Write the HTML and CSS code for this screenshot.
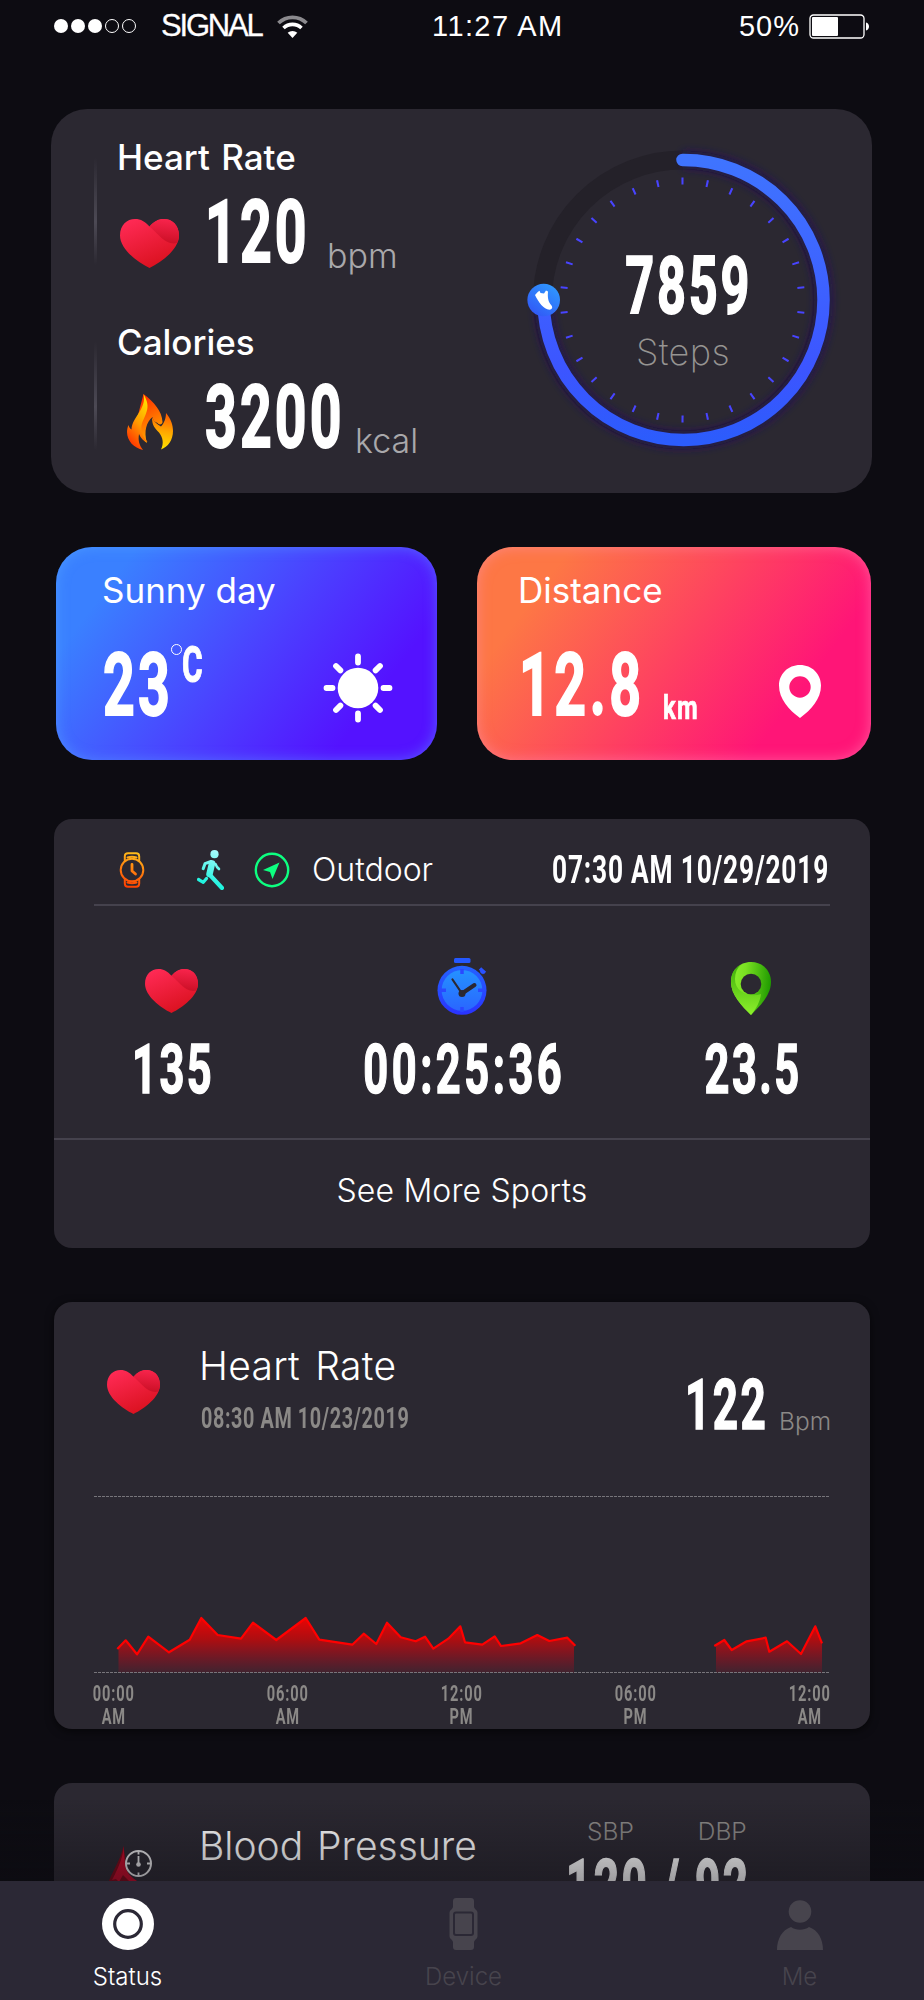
FILE: index.html
```html
<!DOCTYPE html>
<html lang="en">
<head>
    <meta charset="UTF-8">
    <meta name="viewport" content="width=device-width, initial-scale=1.0">
    <title>Status</title>
    <link rel="stylesheet" href="styles.css">
</head>
<body>
    <!-- shared gradients and symbols -->
    <svg class="defs" width="0" height="0">
        <defs>
            <linearGradient id="heartMain" x1="0.2" y1="0" x2="0.7" y2="1">
                <stop offset="0" stop-color="#ff2a55"/>
                <stop offset="1" stop-color="#d8101c"/>
            </linearGradient>
            <linearGradient id="heartFold" x1="0.6" y1="0" x2="0.5" y2="1">
                <stop offset="0" stop-color="#f8244c"/>
                <stop offset="1" stop-color="#cb0f25"/>
            </linearGradient>
            <symbol id="heart" viewBox="0 0 59 49">
                <path fill="url(#heartMain)" d="M29.500 49C17 43 0 30 0 16.500C0 6 7 0 15 0c6 0 10 2.500 14.500 7.500C34 2.500 38 0 44 0c8 0 15 6 15 16.500C59 30 42 43 29.500 49z"/>
                <path fill="url(#heartFold)" d="M29.500 7.500C34 2.500 38 0 44 0c8 0 15 6 15 16.500 0 3-.8 5.500-2 7.500-6 1.500-12-1.500-17-6.500-4-4-7-7-10.500-10z"/>
            </symbol>
        </defs>
    </svg>

    <header class="status-bar">
        <div class="carrier">
            <span class="dots"><i></i><i></i><i></i><i class="off"></i><i class="off"></i></span>
            <span class="signal">SIGNAL</span>
            <svg class="wifi" width="31" height="23" viewBox="0 0 31 23">
                <path d="M15.500 23l-4.800-5.200a7 7 0 0 1 9.600 0z" fill="#fff"/>
                <path d="M6.500 13a13 13 0 0 1 18 0" fill="none" stroke="#fff" stroke-width="3.600"/>
                <path d="M1.500 8a20 20 0 0 1 28 0" fill="none" stroke="#8b8a8e" stroke-width="3.800"/>
            </svg>
        </div>
        <div class="clock">11:27 AM</div>
        <div class="power">
            <span>50%</span>
            <svg width="61" height="25" viewBox="0 0 61 25">
                <rect x="1" y="1" width="54" height="23" rx="3.500" fill="none" stroke="#fff" stroke-width="1.300"/>
                <rect x="3" y="3" width="26" height="19" rx="1" fill="#fff"/>
                <path d="M57 8.500c4 1 4 7 0 8z" fill="#fff"/>
            </svg>
        </div>
    </header>

    <main>
        <section class="card summary">
            <div class="metrics">
                <div class="metric">
                    <div class="bar"></div>
                    <div>
                        <div class="label">Heart Rate</div>
                        <div class="value-row">
                            <svg class="icon-heart" width="59" height="49"><use href="#heart"/></svg>
                            <div class="slot slot-bpm"><span class="din big">120</span></div>
                            <span class="unit">bpm</span>
                        </div>
                    </div>
                </div>
                <div class="metric">
                    <div class="bar"></div>
                    <div>
                        <div class="label">Calories</div>
                        <div class="value-row">
                            <svg class="icon-fire" width="46" height="56" viewBox="0 0 46 56">
                                <defs>
                                    <linearGradient id="fireL" x1="0.7" y1="0" x2="0.3" y2="1">
                                        <stop offset="0" stop-color="#ffe000"/>
                                        <stop offset="0.5" stop-color="#ff9a00"/>
                                        <stop offset="1" stop-color="#ff2a00"/>
                                    </linearGradient>
                                    <linearGradient id="fireM" x1="0.3" y1="0" x2="0.6" y2="1">
                                        <stop offset="0" stop-color="#ff2a00"/>
                                        <stop offset="0.6" stop-color="#ff7a00"/>
                                        <stop offset="1" stop-color="#ffb400"/>
                                    </linearGradient>
                                    <linearGradient id="fireR" x1="0.5" y1="0" x2="0.4" y2="1">
                                        <stop offset="0" stop-color="#ff5a00"/>
                                        <stop offset="0.5" stop-color="#ffa800"/>
                                        <stop offset="1" stop-color="#ffe600"/>
                                    </linearGradient>
                                </defs>
                                <path fill="url(#fireM)" d="M16.500 0C27 8 35 17 35.500 28c0 3-4 3-5 1-3-1-5-3-5-6-6 5-9 14-5.500 26-3-2-5-4-6-8L10 25z"/>
                                <path fill="url(#fireL)" d="M16.500 0c4 7 5 12 3 18-2 7-6 11-5 18 0 4 3 8 6 12-4-1-7-4-8.500-8-1 6 0 11 4 16C7 54 0 47 0 38c0-2 .5-5 1.500-7 .5 2 1.500 4 3 4.500C5 23 20 15 16.500 0z"/>
                                <path fill="url(#fireR)" d="M39 19c5 6 7 12 7 18 0 9-5 16-12 18.500 3-6 2-12-2-17-4-4-7-7-7-15 2 4 5 7 9 9 3-3 5-8 5-13.500z"/>
                            </svg>
                            <div class="slot slot-kcal"><span class="din big">3200</span></div>
                            <span class="unit">kcal</span>
                        </div>
                    </div>
                </div>
            </div>

            <div class="ring">
                <svg width="320" height="320" viewBox="0 0 320 320">
                    <defs>
                        <linearGradient id="ringStroke" x1="0.5" y1="0" x2="0.5" y2="1">
                            <stop offset="0" stop-color="#3f74ff"/>
                            <stop offset="0.75" stop-color="#3c55ff"/>
                            <stop offset="1" stop-color="#2c5cfc"/>
                        </linearGradient>
                        <linearGradient id="knob" x1="0.9" y1="0" x2="0.2" y2="1">
                            <stop offset="0" stop-color="#2f9dff"/>
                            <stop offset="1" stop-color="#3156f6"/>
                        </linearGradient>
                        <filter id="glow" x="-10%" y="-10%" width="120%" height="120%">
                            <feGaussianBlur stdDeviation="4"/>
                        </filter>
                    </defs>
                    <circle cx="159.500" cy="160" r="140" fill="none" stroke="#242129" stroke-width="19"/>
                    <path d="M159.500 20A140 140 0 1 1 20.500 160" fill="none" stroke="#23126b" stroke-opacity="0.600" stroke-width="18" filter="url(#glow)"/>
                    <path d="M159.500 20A140 140 0 1 1 20.500 160" fill="none" stroke="url(#ringStroke)" stroke-width="12.500" stroke-linecap="round"/>
                    <circle cx="159.500" cy="160" r="119" fill="none" stroke="#4844ff" stroke-width="7" pathLength="360" stroke-dasharray="1 11" transform="rotate(-90.500 159.500 160)"/>
                    <circle cx="20.700" cy="160" r="16.300" fill="url(#knob)"/>
                    <path fill="#fff" d="M12 155c1.500-2 3-3.500 4.500-4.300l1 2.300 3.500.5 2-3 2 1c-.5 6 0 10 3.500 14 1.500 2 .5 4-2 4.300-6-.5-11-7.500-14.500-14.800z"/>
                </svg>
                <div class="ring-text">
                    <span class="din steps">7859</span>
                    <span class="steps-label">Steps</span>
                </div>
            </div>
        </section>

        <section class="tiles">
            <div class="tile tile-weather">
                <div class="label">Sunny day</div>
                <div class="tile-row">
                    <div class="slot slot-temp"><span class="din big">23</span></div>
                    <div class="degree"><i></i><span class="din">C</span></div>
                    <svg class="sun" width="70" height="70" viewBox="-35 -35 70 70">
                        <circle r="20.300" fill="#fff"/>
                        <g stroke="#fff" stroke-width="5.800" stroke-linecap="round">
                            <path d="M0-31.500v6M0 25.500v6M-31.500 0h6M25.500 0h6"/>
                            <path d="M-22-22l4.400 4.400M22-22l-4.400 4.400M-22 22l4.400-4.400M22 22l-4.400-4.400"/>
                        </g>
                    </svg>
                </div>
            </div>
            <div class="tile tile-distance">
                <div class="label">Distance</div>
                <div class="tile-row">
                    <div class="slot slot-km"><span class="din big">12.8</span></div>
                    <span class="din km">km</span>
                    <svg class="pin-white" width="42" height="53" viewBox="0 0 42 53">
                        <path fill="#fff" fill-rule="evenodd" d="M21 0c12 0 21 9 21 20.500C42 34 32 45 21 53 10 45 0 34 0 20.500 0 9 9 0 21 0zm0 11.300a10.700 10.700 0 1 0 0 21.400 10.700 10.700 0 0 0 0-21.400z"/>
                    </svg>
                </div>
            </div>
        </section>

        <section class="card sport">
            <div class="sport-head">
                <svg class="watch" width="26" height="36" viewBox="0 0 26 36" fill="none" stroke-width="2" stroke-linejoin="round" stroke-linecap="round">
                    <defs>
                        <linearGradient id="watchG" gradientUnits="userSpaceOnUse" x1="18" y1="0" x2="9" y2="36">
                            <stop offset="0" stop-color="#ffc21c"/>
                            <stop offset="1" stop-color="#ff3c00"/>
                        </linearGradient>
                    </defs>
                    <g stroke="url(#watchG)">
                        <circle cx="13" cy="18" r="11.300"/>
                        <path d="M5.800 8.500V4.500C5.800 2.300 6.800 1.300 9 1.300h8c2.200 0 3.200 1 3.200 3.200v4M8.500 5.500c3-1 6-1 9 0"/>
                        <path d="M5.800 27.500v4c0 2.200 1 3.200 3.200 3.200h8c2.200 0 3.200-1 3.200-3.200v-4M8.500 30.500c3 1 6 1 9 0"/>
                        <path d="M13 12.500v6.500l3.500 3" stroke-width="2.800"/>
                    </g>
                </svg>
                <svg class="runner" width="27" height="40" viewBox="0 0 27 40">
                    <defs>
                        <linearGradient id="runG" gradientUnits="userSpaceOnUse" x1="18" y1="0" x2="8" y2="36">
                            <stop offset="0" stop-color="#a9fbfd"/>
                            <stop offset="1" stop-color="#14f3dc"/>
                        </linearGradient>
                    </defs>
                    <circle cx="17.500" cy="4.200" r="4.100" fill="url(#runG)"/>
                    <g fill="none" stroke="url(#runG)" stroke-linecap="round" stroke-linejoin="round">
                        <path d="M15 13.500L12.500 24" stroke-width="6.500"/>
                        <path d="M14 11.500l-6 2.200-1.800 5" stroke-width="3"/>
                        <path d="M18.500 14l1.500 3 2 2" stroke-width="2.600"/>
                        <path d="M12.500 24.500L25 38" stroke-width="4.200"/>
                        <path d="M9.500 28.500l-3.200 3.800L1.500 29.500" stroke-width="3.200"/>
                    </g>
                </svg>
                <svg class="compass" width="36" height="36" viewBox="0 0 36 36">
                    <circle cx="18" cy="18" r="16.200" fill="none" stroke="#0dff80" stroke-width="2.400"/>
                    <path fill="#0dff80" d="M25.500 10.500L18.500 27l-2.500-7-7-2z"/>
                </svg>
                <span class="outdoor">Outdoor</span>
                <span class="din sport-date">07:30 AM 10/29/2019</span>
            </div>
            <div class="sport-stats">
                <div class="stat stat-heart">
                    <svg width="53" height="44" viewBox="0 0 59 49"><use href="#heart"/></svg>
                    <span class="din">135</span>
                </div>
                <div class="stat">
                    <svg width="50" height="57" viewBox="0 0 50 57">
                        <defs>
                            <linearGradient id="dial" x1="0" y1="0" x2="0" y2="1">
                                <stop offset="0" stop-color="#2492ff"/>
                                <stop offset="1" stop-color="#2a66ff"/>
                            </linearGradient>
                            <linearGradient id="bezel" x1="0" y1="0" x2="0" y2="1">
                                <stop offset="0" stop-color="#2462ff"/>
                                <stop offset="1" stop-color="#2a33ff"/>
                            </linearGradient>
                        </defs>
                        <rect x="17" y="0" width="16.500" height="5" rx="1.500" fill="#2458ff"/>
                        <path d="M44 15l3-3M43 10.500l5 4.500" stroke="#2a52ff" stroke-width="3.500"/>
                        <circle cx="25" cy="32.300" r="24.500" fill="url(#bezel)"/>
                        <circle cx="25" cy="32.300" r="20.400" fill="url(#dial)"/>
                        <path d="M25 11v5M25 49v5M4 32.300h5M41 32.300h5" stroke="#2a48ff" stroke-width="3.500"/>
                        <path d="M15.500 21.500l9.500 14" stroke="#2b2831" stroke-width="2.200" stroke-linecap="round"/>
                        <path d="M25 35.500l12.500-8.500" stroke="#2b2831" stroke-width="4" stroke-linecap="round"/>
                        <circle cx="25" cy="35.500" r="3.500" fill="#2b2831"/>
                    </svg>
                    <span class="din duration">00:25:36</span>
                </div>
                <div class="stat">
                    <svg width="40" height="53" viewBox="0 0 40 53">
                        <defs>
                            <linearGradient id="pinG" x1="0" y1="0.300" x2="1" y2="0.400">
                                <stop offset="0" stop-color="#8bf02c"/>
                                <stop offset="0.350" stop-color="#7ae022"/>
                                <stop offset="1" stop-color="#1f9a00"/>
                            </linearGradient>
                            <linearGradient id="pinB" x1="0.500" y1="0" x2="0.500" y2="1">
                                <stop offset="0" stop-color="#3fae0a"/>
                                <stop offset="1" stop-color="#8df02c"/>
                            </linearGradient>
                        </defs>
                        <path fill="url(#pinG)" d="M20 0c12 0 20 9 20 20 0 13-11 24-20 33C11 44 0 33 0 20 0 9 8 0 20 0z"/>
                        <path fill="url(#pinB)" d="M10 2.500C2 7 0 13 0 20c0 13 11 24 20 33 5-6 9-13 10-21-12 4-26-2-26-15C4 11 6 6 10 2.500z"/>
                        <circle cx="20" cy="22" r="10.300" fill="#2b2831"/>
                    </svg>
                    <span class="din">23.5</span>
                </div>
            </div>
            <div class="see-more">See More Sports</div>
        </section>

        <section class="card heart-card">
            <div class="card-head">
                <svg class="h-heart" width="53" height="44" viewBox="0 0 59 49"><use href="#heart"/></svg>
                <div class="card-title">
                    <div class="title">Heart Rate</div>
                    <div class="din sub-date">08:30 AM 10/23/2019</div>
                </div>
                <div class="slot slot-122"><span class="din mid">122</span></div>
                <span class="unit-small">Bpm</span>
            </div>
            <div class="chart">
                <svg width="736" height="178" viewBox="0 -103 736 178">
                    <defs>
                        <linearGradient id="area" gradientUnits="userSpaceOnUse" x1="0" y1="19" x2="0" y2="74">
                            <stop offset="0" stop-color="#ff0000" stop-opacity="0.900"/>
                            <stop offset="0.400" stop-color="#f00000" stop-opacity="0.650"/>
                            <stop offset="1" stop-color="#d80020" stop-opacity="0.120"/>
                        </linearGradient>
                    </defs>
                    <path fill="url(#area)" d="M24.500 49L31.700 41.300 43 55.300 54.300 37.700 75 53.300 95.700 40.700 107.300 19 123.700 36 147 39.700 159 23.700 182.300 41 211.700 19 225.300 40.700 258.300 45.700 269.700 34.700 282.300 45 293 23.700 306.700 38.300 321.700 42.300 331 37.700 339.300 49.700 354.300 39.700 366.300 27.300 371 43.300 388.300 45.700 400.700 37.300 407 47 426.700 44.300 443.300 36 455.300 42 473.300 38.700 480 46V74H24.500z"/>
                    <path fill="url(#area)" d="M622 46L630.300 41 637.700 51 652.700 42.300 671.700 38.700 675.300 52.700 693 42.300 707 55 721.300 27.300 728 44.300V74H622z"/>
                    <g fill="none" stroke="#ff0000" stroke-width="2.200" stroke-linejoin="round">
                        <polyline points="23.300,50 31.700,41.300 43,55.300 54.300,37.700 75,53.300 95.700,40.700 107.300,19 123.700,36 147,39.700 159,23.700 182.300,41 211.700,19 225.300,40.700 258.300,45.700 269.700,34.700 282.300,45 293,23.700 306.700,38.300 321.700,42.300 331,37.700 339.300,49.700 354.300,39.700 366.300,27.300 371,43.300 388.300,45.700 400.700,37.300 407,47 426.700,44.300 443.300,36 455.300,42 473.300,38.700 481.300,46.700"/>
                        <polyline points="620.300,47 630.300,41 637.700,51 652.700,42.300 671.700,38.700 675.300,52.700 693,42.300 707,55 721.300,27.300 728,44.300"/>
                    </g>
                    <path d="M0-102.500h735M0 73.500h735" stroke="#77757b" stroke-width="1" stroke-dasharray="3 1"/>
                </svg>
                <div class="axis">
                    <div><span class="din">00:00</span><span class="din">AM</span></div>
                    <div><span class="din">06:00</span><span class="din">AM</span></div>
                    <div><span class="din">12:00</span><span class="din">PM</span></div>
                    <div><span class="din">06:00</span><span class="din">PM</span></div>
                    <div><span class="din">12:00</span><span class="din">AM</span></div>
                </div>
            </div>
        </section>

        <section class="card bp-card">
            <div class="card-head">
                <svg class="drop" width="46" height="60" viewBox="0 0 46 60">
                    <path fill="#7c0818" d="M16.500 0C15 8 11 16 6.500 25 3 32 0 38 0 44c0 9 8 16 17 16s17-7 17-16c0-2 0-4-1-6C24 34 18 26 18.500 14z"/>
                    <path fill="#c00a28" d="M16.500 0c0 9-4 20-11.500 34l4-1 3 3 4-7 6 6 10 1c-7-4-13.500-10-14-17z"/>
                    <circle cx="31.500" cy="17.500" r="12.500" fill="none" stroke="#e6e5e7" stroke-width="2"/>
                    <path d="M31.500 10v8M31.500 5.500v3M31.500 26.500v3M20 17.500h3M40 17.500h3" stroke="#e6e5e7" stroke-width="1.800"/>
                    <circle cx="31.500" cy="18.500" r="2.300" fill="#e6e5e7"/>
                </svg>
                <div class="card-title">
                    <div class="title">Blood Pressure</div>
                </div>
                <div class="bp">
                    <div class="bp-labels"><span>SBP</span><span>DBP</span></div>
                    <span class="din mid">120 / 92</span>
                </div>
            </div>
        </section>
    </main>

    <div class="fade"></div>
    <nav class="tab-bar">
        <div class="tab active">
            <svg width="52" height="52" viewBox="0 0 52 52">
                <circle cx="26" cy="26" r="26" fill="#fff"/>
                <circle cx="26" cy="26" r="13.300" fill="none" stroke="#2b2835" stroke-width="3.200"/>
            </svg>
            <span>Status</span>
        </div>
        <div class="tab">
            <svg width="52" height="52" viewBox="0 0 52 52" fill="#47444d">
                <path d="M15 3c0-2 1-3 3-3h15c2 0 3 1 3 3v6c1 3 3.500 3 3.500 6v23c0 3-2.500 3-3.500 6v5c0 2-1 3-3 3H18c-2 0-3-1-3-3v-5c-1-3-3.500-3-3.500-6V15c0-3 2.500-3 3.500-6z"/>
                <rect x="16" y="14.500" width="19" height="22.500" rx="2" stroke="#2b2835" stroke-width="2"/>
            </svg>
            <span>Device</span>
        </div>
        <div class="tab">
            <svg width="52" height="52" viewBox="0 0 52 52" fill="#47444d">
                <circle cx="26" cy="13.500" r="11.300"/>
                <path d="M17 29c5 3.500 13 3.500 18 0 9 3 14 12 14 23H3c0-11 5-20 14-23z"/>
            </svg>
            <span>Me</span>
        </div>
    </nav>
</body>
</html>
```

FILE: styles.css
```css
* {
    box-sizing: border-box;
}

body {
    margin: 0;
    width: 924px;
    height: 2000px;
    overflow: hidden;
    background: #0d0c12;
    color: #fff;
    font-family: Inter, "Liberation Sans", sans-serif;
}

svg {
    display: block;
    flex: none;
}

.defs {
    position: absolute;
}

/* narrow digits */
.din {
    display: block;
    flex: none;
    font-family: Roboto, "Liberation Sans", sans-serif;
    font-weight: 700;
    line-height: 1;
    letter-spacing: 0.056em;
    white-space: nowrap;
    transform: scaleX(0.63);
    transform-origin: left top;
    -webkit-text-stroke: 0.022em currentColor;
}

.big {
    font-size: 88px;
}

.mid {
    font-size: 70px;
}

.slot {
    display: flex;
    flex: none;
}

.label {
    font-size: 35px;
    line-height: 35px;
    font-weight: 500;
    word-spacing: 2px;
    margin-left: 1px;
}

/* status bar */
.status-bar {
    display: grid;
    grid-template-columns: 1fr 1fr 1fr;
    align-items: center;
    height: 52px;
    padding: 0 54px;
    font-size: 29px;
    font-family: "Liberation Sans", Arial, sans-serif;
}

.carrier,
.power {
    display: flex;
    align-items: center;
}

.dots {
    display: flex;
    gap: 3px;
    margin-right: 25px;
}

.dots i {
    width: 14px;
    height: 14px;
    border-radius: 50%;
    background: #fff;
}

.dots .off {
    background: none;
    border: 1px solid #fff;
}

.signal {
    width: 101px;
    margin-right: 15px;
    font-size: 31px;
    letter-spacing: -2.200px;
    -webkit-text-stroke: 0.300px #fff;
}

.clock {
    padding-left: 106px;
    letter-spacing: 1.400px;
    white-space: nowrap;
}

.power {
    justify-content: flex-end;
    gap: 9px;
    letter-spacing: 1px;
}

/* summary card */
.card {
    background: #2b2831;
    border-radius: 18px;
    margin: 0 54px;
}

.summary {
    display: flex;
    width: 821px;
    height: 384px;
    margin: 57px 0 0 51px;
    padding: 31px 0 0 43px;
    border-radius: 36px;
}

.metrics {
    display: flex;
    flex-direction: column;
    gap: 49px;
    width: 429px;
}

.metric {
    display: flex;
    height: 136px;
}

.bar {
    width: 3px;
    height: 108px;
    margin: 17px 19px 0 0;
    background: linear-gradient(rgba(82, 79, 90, 0), #4c4954 60%, rgba(82, 79, 90, 0));
}

.value-row {
    display: flex;
    margin-top: 13px;
    height: 88px;
}

.icon-heart {
    margin: 31px 26px 0 4px;
}

.icon-fire {
    margin: 21px 32px 0 11px;
}

.slot-bpm {
    width: 122px;
}

.slot-kcal {
    width: 150px;
}

.unit {
    margin-top: 51px;
    font-size: 34px;
    line-height: 33px;
    font-weight: 300;
    color: #a9a8ab;
}

.ring {
    display: grid;
    height: 320px;
}

.ring > * {
    grid-area: 1 / 1;
}

.ring-text {
    display: flex;
    flex-direction: column;
    align-items: center;
    padding-top: 106px;
}

.steps {
    font-size: 80px;
    transform-origin: center top;
    margin-left: 11px;
}

.steps-label {
    margin-top: 9px;
    font-size: 36px;
    line-height: 35px;
    letter-spacing: 0.400px;
    font-weight: 200;
    color: #969492;
}

/* weather and distance */
.tiles {
    display: flex;
    gap: 40px;
    margin: 54px 0 0 56px;
}

.tile {
    height: 213px;
    padding-top: 26px;
    border-radius: 36px;
}

.tile .label {
    font-weight: 400;
    word-spacing: 0;
}

.tile-weather {
    width: 381px;
    padding-left: 45px;
    background: linear-gradient(127deg, #3a80ff 15%, #4b40ff 52%, #5412ff 80%);
    box-shadow: inset 0 0 14px rgba(90, 180, 255, 0.450);
}

.tile-distance {
    width: 394px;
    padding-left: 40px;
    background: linear-gradient(127deg, #fd7745 17%, #fe4260 50%, #ff1577 78%);
    box-shadow: inset 0 0 14px rgba(255, 150, 190, 0.500);
}

.tile-row {
    display: flex;
    margin-top: 33px;
}

.slot-temp {
    width: 68px;
    margin-left: 2px;
}

.degree {
    display: flex;
    width: 152px;
}

.degree i {
    width: 11px;
    height: 11px;
    margin: 3px 0 0 0;
    border: 1.500px solid #fff;
    border-radius: 50%;
}

.degree .din {
    font-size: 50px;
    margin-top: -1px;
}

.sun {
    margin-top: 12px;
}

.slot-km {
    width: 144px;
    margin-left: 2px;
}

.slot-km .din {
    letter-spacing: 0.064em;
}

.km {
    width: 116px;
    margin-top: 49px;
    font-size: 34px;
    transform: scaleX(0.7);
}

.pin-white {
    margin-top: 24px;
}

/* sport card */
.sport {
    height: 429px;
    margin-top: 59px;
}

.sport-head {
    display: flex;
    height: 87px;
    margin: 0 40px;
    border-bottom: 2px solid #45424d;
}

.watch {
    margin: 33px 0 0 25px;
}

.runner {
    margin: 31px 0 0 52px;
}

.compass {
    margin: 33px 0 0 30px;
}

.outdoor {
    margin: 35px 0 0 22px;
    font-size: 32px;
    line-height: 32px;
    font-weight: 300;
}

.sport-date {
    margin: 32px 0 0 auto;
    width: 278px;
    font-size: 39px;
    letter-spacing: 0.030em;
    transform: scaleX(0.675);
    -webkit-text-stroke-width: 0;
}

.sport-stats {
    display: flex;
    justify-content: space-between;
    height: 232px;
    padding: 50px 19px 0;
}

.stat {
    display: flex;
    flex-direction: column;
    align-items: center;
    justify-content: flex-end;
    width: 200px;
    height: 148px;
}

.stat .din {
    font-size: 69px;
    transform-origin: center top;
    margin-top: 20px;
    margin-left: 4px;
}

.stat-heart {
    margin-left: -2px;
    margin-right: 2px;
}

.stat-heart .din {
    margin-top: 22px;
}

.stat .duration {
    letter-spacing: 0.080em;
}

.see-more {
    height: 109px;
    border-top: 2px solid #45424d;
    font-size: 32px;
    line-height: 101px;
    letter-spacing: 0.150px;
    font-weight: 300;
    text-align: center;
}

/* heart rate card */
.heart-card {
    height: 427px;
    margin-top: 55px;
    box-shadow: 0 2px 8px rgba(0, 0, 0, 0.600);
}

.sport + .heart-card {
    margin-top: 54px;
}

.card-head {
    display: flex;
    height: 194px;
    padding-left: 53px;
}

.h-heart {
    margin-top: 68px;
}

.card-title {
    width: 480px;
    margin-left: 38px;
    padding-top: 44px;
}

.title {
    font-size: 39px;
    line-height: 39px;
    font-weight: 300;
    letter-spacing: 0.300px;
    word-spacing: 4px;
    white-space: nowrap;
    margin-left: 1px;
}

.sub-date {
    margin: 18px 0 0 3px;
    width: 210px;
    font-size: 30px;
    font-weight: 700;
    letter-spacing: 0.030em;
    color: #8b8987;
    transform: scaleX(0.660);
    -webkit-text-stroke-width: 0;
}

.slot-122 {
    width: 97px;
    margin: 68px 0 0 7px;
}

.unit-small {
    margin: 107px 0 0 -3px;
    font-size: 24.500px;
    line-height: 24px;
    font-weight: 300;
    color: #8b8987;
}

.chart {
    margin: 0 40px;
}

.axis {
    display: flex;
    justify-content: space-between;
    margin-top: 8px;
}

.axis div {
    display: flex;
    flex-direction: column;
    align-items: center;
    width: 40px;
}

.axis .din {
    font-size: 21.500px;
    line-height: 23.300px;
    font-weight: 700;
    color: #8b8987;
    transform: scaleX(0.680);
    transform-origin: center top;
    -webkit-text-stroke-width: 0;
}

/* blood pressure card */
.bp-card {
    height: 300px;
    margin-top: 54px;
}

.drop {
    margin: 63px 0 0 0;
}

.bp-card .card-title {
    width: 350px;
    margin-left: 45px;
    padding-top: 43px;
}

.bp-card .title {
    letter-spacing: 0;
    word-spacing: 3px;
}

.bp {
    width: 200px;
    margin-left: 18px;
    padding-top: 36px;
}

.bp-labels {
    display: flex;
    gap: 64px;
    padding-left: 21px;
    font-size: 24.500px;
    line-height: 24px;
    font-weight: 300;
    color: #8b8987;
}

.bp .din {
    margin-top: 7px;
}

/* content fades out behind the tab bar */
.fade {
    position: fixed;
    left: 0;
    top: 1800px;
    width: 924px;
    height: 81px;
    background: linear-gradient(rgba(13, 12, 18, 0), rgba(13, 12, 18, 0.400));
}

.tab-bar {
    position: fixed;
    left: 0;
    top: 1881px;
    display: flex;
    justify-content: space-between;
    width: 924px;
    height: 119px;
    padding: 17px 64px 0 67px;
    background: #2b2835;
}

.tab {
    display: flex;
    flex-direction: column;
    align-items: center;
    gap: 15px;
    width: 121px;
    font-size: 24px;
    line-height: 24px;
    font-weight: 300;
    color: #47444d;
}

.active {
    color: #fff;
}
```
